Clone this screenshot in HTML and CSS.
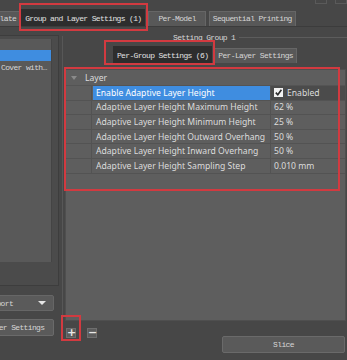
FILE: index.html
```html
<!DOCTYPE html>
<html lang="en">
<head>
    <meta charset="UTF-8">
    <title>Group and Layer Settings</title>
    <link rel="stylesheet" href="styles.css">
</head>
<body>
    <div class="window">
        <div class="tabbar">
            <div class="tab first">Template</div>
            <div class="tab active">Group and Layer Settings (1)</div>
            <div class="tab model">Per-Model</div>
            <div class="tab">Sequential Printing</div>
            <div class="winbtns"><span></span><span></span></div>
        </div>

        <div class="content">
            <div class="left">
                <div class="objpanel">
                    <div class="objlist">
                        <div class="obj selected">Group 1</div>
                        <div class="obj">Cover with&hellip;</div>
                    </div>
                </div>
                <div class="combo"><span>Support</span><i class="arrow"></i></div>
                <div class="button left-btn">Per-Layer Settings</div>
            </div>

            <div class="right">
                <div class="group">
                    <div class="group-title">Setting Group 1</div>
                    <div class="subtabs">
                        <div class="tab active">Per-Group Settings (6)</div>
                        <div class="tab">Per-Layer Settings</div>
                    </div>
                    <div class="tree">
                        <div class="tree-head"><i class="caret"></i>Layer</div>
                        <div class="row">
                            <div class="indent"></div>
                            <div class="label selected">Enable Adaptive Layer Height</div>
                            <div class="value dark"><span class="check">
                                <svg width="9" height="9" viewBox="0 0 9 9"><path d="M1.8 4.6 L3.8 6.8 L7.4 1.8" fill="none" stroke="#2a2a2a" stroke-width="1.6"/></svg>
                            </span>Enabled</div>
                        </div>
                        <div class="row">
                            <div class="indent"></div>
                            <div class="label">Adaptive Layer Height Maximum Height</div>
                            <div class="value">62 %</div>
                        </div>
                        <div class="row">
                            <div class="indent"></div>
                            <div class="label">Adaptive Layer Height Minimum Height</div>
                            <div class="value">25 %</div>
                        </div>
                        <div class="row">
                            <div class="indent"></div>
                            <div class="label">Adaptive Layer Height Outward Overhang</div>
                            <div class="value">50 %</div>
                        </div>
                        <div class="row">
                            <div class="indent"></div>
                            <div class="label">Adaptive Layer Height Inward Overhang</div>
                            <div class="value">50 %</div>
                        </div>
                        <div class="row">
                            <div class="indent"></div>
                            <div class="label">Adaptive Layer Height Sampling Step</div>
                            <div class="value">0.010 mm</div>
                        </div>
                    </div>
                </div>
                <div class="bottom">
                    <div class="small-btn">+</div>
                    <div class="small-btn">&minus;</div>
                    <div class="button slice">Slice</div>
                </div>
            </div>
        </div>
    </div>

    <!-- annotation boxes -->
    <div class="mark m1"></div>
    <div class="mark m2"></div>
    <div class="mark m3"></div>
    <div class="mark m4"></div>
</body>
</html>
```

FILE: styles.css
```css
body {
    margin: 0;
    background: #474747;
    overflow: hidden;
}
.window {
    position: relative;
    width: 347px;
    height: 360px;
    display: flex;
    flex-direction: column;
    font-family: 'Liberation Mono', monospace;
    font-size: 8px;
    letter-spacing: -0.65px;
    color: #d6d6d6;
}
.tabbar {
    height: 27px;
    display: flex;
    align-items: flex-end;
    gap: 3px;
    border-bottom: 1px solid #3c3c3c;
    box-sizing: border-box;
}
.tab {
    height: 14px;
    line-height: 14px;
    padding: 0 3px;
    background: #585858;
    border: 1px solid #666;
    border-bottom: none;
    white-space: nowrap;
}
.tab.first {
    margin-left: -21px;
    margin-right: -2px;
    border-right-color: #4a4a4a;
}
.tab.active {
    height: 16px;
    line-height: 17px;
    background: #2d2d2d;
    border-color: #2d2d2d;
    color: #e2e2e2;
}
.tab.model {
    padding: 0 9px;
}
.winbtns {
    margin-left: auto;
    align-self: flex-start;
    display: flex;
    gap: 8px;
}
.winbtns span {
    width: 10px;
    height: 3px;
    border: 1px solid #5a5a5a;
    border-top: none;
}
.content {
    flex: 1;
    display: flex;
}
.left {
    width: 99px;
    margin-left: -40px;
    padding-top: 8px;
    display: flex;
    flex-direction: column;
}
.objpanel {
    height: 251px;
    background: #4b4b4b;
    border: 1px solid #3d3d3d;
    box-sizing: border-box;
    padding: 3px 6px 23px 0;
}
.objlist {
    height: 100%;
    background: #595959;
    border-right: 1px solid #444;
    padding-top: 11px;
    box-sizing: border-box;
}
.obj {
    height: 11px;
    line-height: 11px;
    padding-left: 40px;
    white-space: nowrap;
    overflow: hidden;
    margin-bottom: 1px;
}
.obj.selected {
    background: #3f8de0;
    color: #3f8de0;
}
.combo {
    margin-top: 9px;
    margin-right: 5px;
    height: 16px;
    background: #5a5a5a;
    border: 1px solid #666;
    border-radius: 2px;
    box-sizing: border-box;
    display: flex;
    align-items: center;
    padding-left: 23px;
}
.arrow {
    margin-left: auto;
    margin-right: 7px;
    width: 0;
    height: 0;
    border-left: 4px solid transparent;
    border-right: 4px solid transparent;
    border-top: 4px solid #e6e6e6;
}
.button {
    height: 17px;
    line-height: 15px;
    background: #5a5a5a;
    border: 1px solid #6a6a6a;
    border-radius: 2px;
    box-sizing: border-box;
    text-align: center;
    white-space: nowrap;
}
.left-btn {
    margin-top: 8px;
    margin-right: 5px;
}
.right {
    flex: 1;
    margin-left: 3px;
    display: flex;
    flex-direction: column;
}
.group {
    margin-top: 9px;
    border-left: 1px solid #575757;
    height: 287px;
    display: flex;
    flex-direction: column;
}
.group-title {
    display: flex;
    align-items: center;
    height: 2px;
    padding-left: 110px;
    white-space: nowrap;
}
.group-title::after {
    content: '';
    flex: 1;
    height: 1px;
    background: #5c5c5c;
    margin-left: 4px;
}
.subtabs {
    margin-top: 9px;
    display: flex;
    justify-content: center;
    align-items: flex-end;
    gap: 2px;
    height: 16px;
}
.tree {
    margin: 6px 1px 0 2px;
    height: 252px;
    background: #5e5e5e;
    border: 1px solid #4f4f4f;
    box-sizing: border-box;
    padding-top: 1px;
    font-family: 'Noto Sans', sans-serif;
    font-size: 8.6px;
    letter-spacing: 0;
    color: #dcdcdc;
}
.tree-head {
    height: 14px;
    display: flex;
    align-items: center;
    padding-left: 17px;
    border-bottom: 1px solid #545454;
}
.caret {
    width: 0;
    height: 0;
    margin-left: -12px;
    margin-right: 8px;
    border-left: 3px solid transparent;
    border-right: 3px solid transparent;
    border-top: 4px solid #8a8a8a;
}
.row {
    display: grid;
    grid-template-columns: 26px 179px 1fr;
    height: 14.6px;
    box-sizing: border-box;
    border-bottom: 1px solid #535353;
}
.indent {
    border-right: 1px solid #535353;
}
.label, .value {
    display: flex;
    align-items: center;
    white-space: nowrap;
    padding-left: 3px;
}
.label {
    border-right: 1px solid #535353;
    margin-left: 1px;
}
.label.selected {
    background: #3f8de0;
    color: #fff;
}
.value.dark {
    background: #4b4b4b;
}
.check {
    width: 9px;
    height: 9px;
    background: #f2f2f2;
    margin-right: 4px;
    display: flex;
}
.bottom {
    display: flex;
    align-items: flex-start;
    padding-top: 5px;
    padding-left: 4px;
}
.small-btn {
    width: 10px;
    height: 10px;
    background: #5c5c5c;
    border: 1px solid #6e6e6e;
    box-sizing: border-box;
    font-family: 'DejaVu Sans', sans-serif;
    font-size: 11px;
    font-weight: bold;
    line-height: 8px;
    text-align: center;
    color: #e8e8e8;
    margin-right: 11px;
    letter-spacing: 0;
}
.slice {
    margin-left: auto;
    margin-top: 8px;
    margin-right: 2px;
    width: 123px;
}
.mark {
    position: absolute;
    border: 2px solid #d23a40;
    box-sizing: border-box;
}
.m1 { left: 19px; top: 3px; width: 129px; height: 28px; }
.m2 { left: 104px; top: 40px; width: 111px; height: 25px; }
.m3 { left: 64px; top: 67px; width: 276px; height: 124px; }
.m4 { left: 61px; top: 315px; width: 20px; height: 26px; }
```
